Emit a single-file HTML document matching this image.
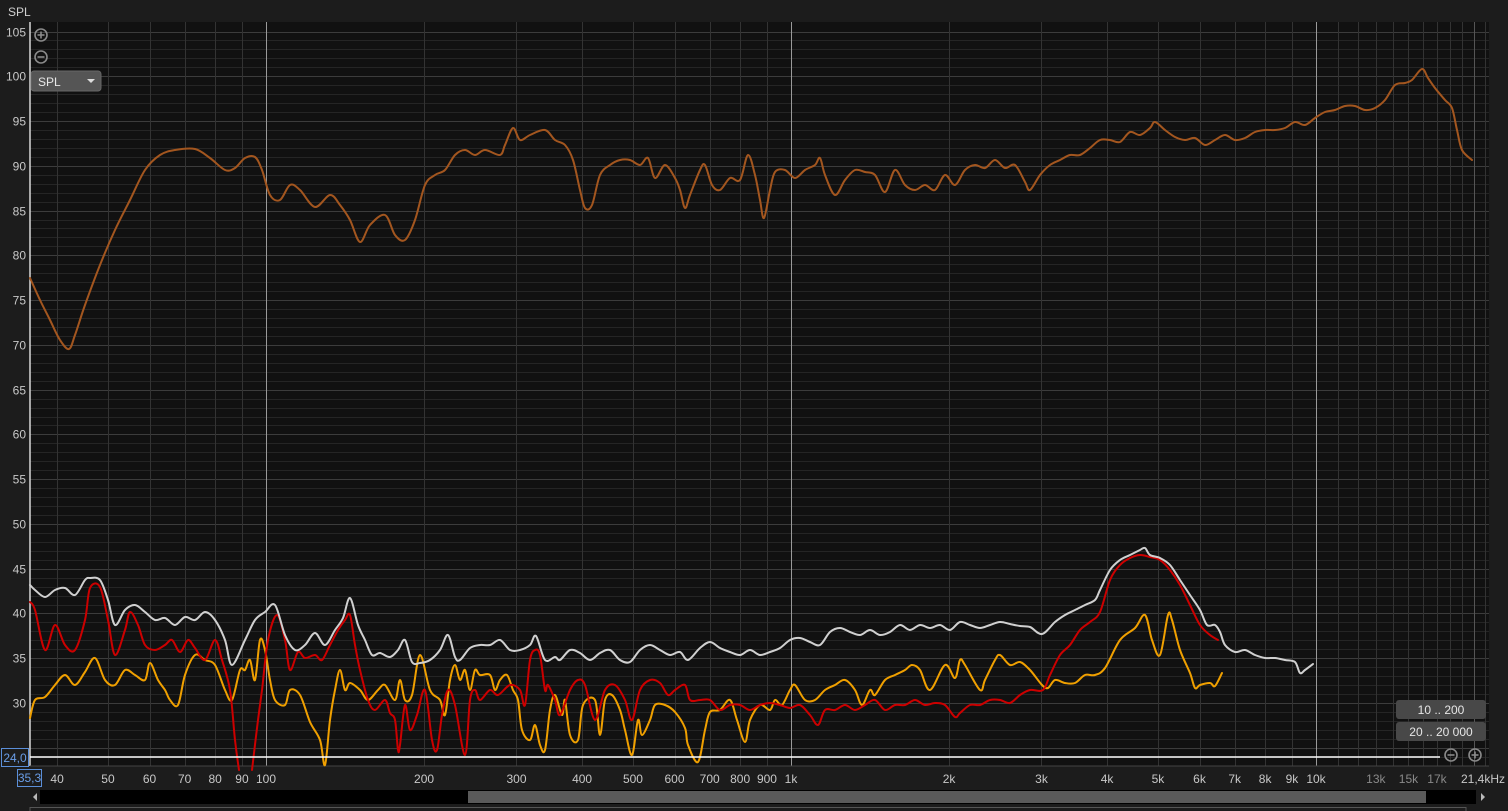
<!DOCTYPE html>
<html><head><meta charset="utf-8"><style>
html,body{margin:0;padding:0;background:#1c1c1c;overflow:hidden}
svg{display:block}
text{font-family:"Liberation Sans",sans-serif}
</style></head><body>
<svg id="s" width="1508" height="811" xmlns="http://www.w3.org/2000/svg">
<rect width="1508" height="811" fill="#1c1c1c"/>
<rect x="30" y="22" width="1459" height="744" fill="#111111"/>
<g id="grid"></g>
<g id="labels" font-size="12" fill="#c8c8c8"></g>
<text x="8" y="16" font-size="12" fill="#d0d0d0">SPL</text>
<line x1="30" y1="22" x2="30" y2="766" stroke="#d8d8d8" stroke-width="1.5"/>
<line x1="30" y1="766" x2="1489" y2="766" stroke="#444"/>
<g id="curves" fill="none" stroke-width="2" stroke-linejoin="round" stroke-linecap="round">
<polyline stroke="#a3561f" points="30,278 40,300 50,320 60,340 69,349 75,335 85,305 100,265 115,230 130,200 145,170 160,155 175,150 195,149 210,158 225,170 235,168 245,158 255,157 262,170 270,195 280,200 290,185 300,190 315,207 330,195 340,205 350,220 360,242 370,225 385,215 395,235 405,240 415,220 425,185 435,175 445,170 455,155 465,150 475,155 485,150 500,155 505,145 513,128 520,140 530,135 545,130 555,140 565,145 573,160 580,190 585,208 592,205 600,175 610,165 620,160 630,160 640,165 648,158 655,178 665,165 675,178 680,190 685,208 690,195 700,170 705,165 712,185 720,190 730,178 740,180 748,155 755,175 760,200 764,218 770,190 775,172 785,170 795,178 805,170 815,165 820,158 825,175 835,195 845,180 855,170 865,172 875,175 885,192 895,170 905,185 915,190 925,185 935,190 945,175 955,185 965,170 975,165 985,168 995,160 1005,168 1015,165 1025,182 1030,190 1040,175 1050,165 1060,160 1070,155 1080,155 1090,148 1100,140 1110,140 1120,142 1130,132 1140,135 1150,128 1155,122 1165,130 1175,137 1185,140 1195,138 1205,145 1215,140 1225,135 1235,140 1245,138 1255,132 1265,130 1275,130 1285,128 1295,122 1305,125 1315,118 1325,112 1335,110 1345,106 1355,106 1365,110 1375,108 1385,100 1395,85 1405,83 1412,80 1422,69 1428,78 1435,88 1445,100 1452,108 1457,130 1462,150 1472,160"/>
<polyline stroke="#f0a000" points="30,718 35,700 45,697 55,685 65,675 75,685 85,672 95,658 105,680 115,685 125,670 135,675 145,680 150,663 158,680 165,690 170,700 178,705 185,675 195,655 205,660 215,665 225,690 232,700 240,670 245,670 250,660 255,680 260,640 265,650 270,680 275,700 285,705 290,690 300,695 310,722 320,740 325,765 330,720 335,690 340,670 345,690 350,683 360,690 368,700 378,690 385,685 395,700 400,680 405,700 412,695 420,655 430,690 440,700 445,715 450,680 455,665 460,680 465,670 470,690 475,670 480,675 490,675 495,690 500,680 507,675 513,690 518,700 522,730 530,740 535,725 540,745 545,750 550,710 555,695 562,715 565,700 570,735 578,740 583,705 595,700 600,735 605,700 612,695 620,710 625,730 632,755 638,720 642,735 650,720 655,705 665,705 675,712 685,728 688,745 698,762 705,730 710,712 720,710 730,700 737,720 745,742 750,720 760,705 770,710 775,700 782,705 790,690 795,685 805,700 815,700 825,690 835,685 845,680 855,690 862,705 870,690 875,695 885,680 895,675 905,670 912,665 920,670 930,690 945,665 955,678 960,660 965,665 980,690 985,680 995,660 1000,655 1010,665 1020,662 1030,670 1042,685 1048,688 1055,680 1065,683 1075,683 1085,675 1095,675 1105,668 1120,640 1135,628 1145,615 1152,640 1160,655 1168,615 1172,620 1180,650 1190,673 1195,688 1200,685 1210,683 1215,686 1222,673"/>
<polyline stroke="#cc0000" points="30,602 35,610 45,650 55,625 65,645 75,650 85,620 90,588 100,587 108,620 115,655 125,630 130,612 138,625 145,645 155,650 165,645 172,640 180,652 188,640 195,648 205,660 215,640 222,660 230,690 235,740 239,770"/>
<polyline stroke="#cc0000" points="252,770 258,720 262,690 268,640 277,615 285,640 290,670 298,652 305,658 315,655 322,660 330,645 338,630 345,620 350,615 355,645 360,670 368,700 375,710 385,700 390,713 395,720 398,750 400,745 405,705 410,730 417,715 425,690 432,740 437,750 442,715 448,690 455,705 465,755 470,700 475,690 480,700 490,690 498,695 510,685 520,690 525,705 530,660 535,650 540,655 545,690 548,685 555,700 560,715 570,690 578,680 585,685 595,720 605,690 615,685 625,700 632,720 640,690 650,680 660,683 668,695 675,690 685,685 690,700 700,700 710,700 720,710 730,705 740,705 750,710 760,705 770,703 780,705 790,708 800,705 810,715 818,725 825,710 835,710 845,705 855,710 865,705 875,700 885,710 895,705 905,705 915,700 925,705 935,703 945,705 955,717 960,713 970,705 980,705 990,700 1000,700 1010,703 1020,695 1030,690 1043,690 1050,675 1060,655 1070,645 1080,630 1090,622 1100,612 1110,580 1120,565 1130,558 1140,555 1150,557 1160,560 1170,570 1180,585 1190,605 1200,625 1210,635 1218,640"/>
<polyline stroke="#d0d0d0" points="30,585 35,590 45,597 55,590 65,588 75,595 85,580 90,578 100,580 108,600 115,625 125,610 135,605 145,612 155,620 165,618 175,625 185,617 195,620 205,612 215,620 225,640 232,665 245,640 255,620 265,612 275,605 285,635 295,650 305,645 315,633 325,645 335,630 343,618 350,598 358,625 365,640 372,655 380,653 390,657 398,650 405,640 412,662 420,663 430,660 440,650 448,635 455,657 460,660 470,648 480,645 490,645 500,640 510,650 520,650 530,645 536,636 545,660 555,657 560,660 570,650 580,653 590,660 600,653 610,650 620,660 630,662 640,650 650,645 660,650 670,655 680,652 688,660 700,648 710,642 720,648 730,652 740,655 750,650 760,655 770,652 780,648 790,640 800,638 810,642 820,645 830,632 840,628 850,632 860,635 870,630 880,635 890,632 900,625 910,630 920,625 930,628 940,625 950,630 960,622 970,625 980,628 990,625 1000,622 1010,624 1020,626 1030,627 1042,634 1055,622 1065,615 1075,610 1085,605 1095,600 1100,590 1110,570 1120,560 1130,555 1140,550 1145,548 1150,555 1160,558 1170,565 1180,580 1190,595 1200,610 1207,625 1215,625 1220,632 1225,645 1235,652 1245,650 1255,655 1265,658 1275,658 1285,660 1295,662 1300,673 1305,670 1313,664"/>
</g>
<line x1="30" y1="757" x2="1440" y2="757" stroke="#ffffff" stroke-width="1.5"/>
<rect x="1.5" y="748.5" width="27" height="18" fill="#1c1c1c" stroke="#5b8fd9"/>
<text x="15" y="762" font-size="12" fill="#6a9ee8" text-anchor="middle">24,0</text>
<rect x="17.5" y="769.5" width="24" height="17" fill="#1c1c1c" stroke="#5b8fd9"/>
<text x="29.5" y="782" font-size="12" fill="#6a9ee8" text-anchor="middle">35,3</text>
<g stroke="#8a8a8a" stroke-width="1.6" fill="none">
<circle cx="41" cy="35" r="6"/><line x1="37.5" y1="35" x2="44.5" y2="35"/><line x1="41" y1="31.5" x2="41" y2="38.5"/>
<circle cx="41" cy="57" r="6"/><line x1="37.5" y1="57" x2="44.5" y2="57"/>
<circle cx="1451" cy="755" r="6"/><line x1="1447.5" y1="755" x2="1454.5" y2="755"/>
<circle cx="1475" cy="755" r="6"/><line x1="1471.5" y1="755" x2="1478.5" y2="755"/><line x1="1475" y1="751.5" x2="1475" y2="758.5"/>
</g>
<rect x="31" y="71" width="70" height="20" rx="3" fill="#555" stroke="#666"/>
<text x="38" y="86" font-size="12" fill="#e8e8e8">SPL</text>
<polygon points="87,79 95,79 91,83" fill="#ddd"/>
<rect x="1396" y="700" width="90" height="19" rx="3" fill="#484848"/>
<text x="1441" y="714" font-size="12" fill="#e6e6e6" text-anchor="middle">10 .. 200</text>
<rect x="1396" y="722" width="90" height="19" rx="3" fill="#484848"/>
<text x="1441" y="736" font-size="12" fill="#e6e6e6" text-anchor="middle">20 .. 20 000</text>
<polygon points="37,793 37,801 33,797" fill="#bbb"/>
<rect x="40" y="790" width="1436" height="14" fill="#000"/>
<rect x="468" y="791" width="958" height="12" fill="#5a5a5a"/>
<polygon points="1481,793 1481,801 1485,797" fill="#bbb"/>
<line x1="30" y1="807.5" x2="1466" y2="807.5" stroke="#555"/>
<line x1="30" y1="807" x2="30" y2="811" stroke="#555"/>
<line x1="1466" y1="807" x2="1466" y2="811" stroke="#555"/>
</svg>
<script>
var NS="http://www.w3.org/2000/svg",g=document.getElementById('grid'),L=document.getElementById('labels');
function el(p,t,a){var e=document.createElementNS(NS,t);for(var k in a)e.setAttribute(k,a[k]);p.appendChild(e);return e;}
function Y(d){return 703-(d-30)*8.953;}
function X(f){return 266+525*Math.log10(f/100);}
for(var d=24;d<=105;d++){var y=Math.round(Y(d))+0.5;if(y<22)continue;
 el(g,'line',{x1:30,x2:1489,y1:y,y2:y,stroke:d%5==0?'#3c3c3c':'#252525'});
 if(d%5==0&&d>=30){var t=el(L,'text',{x:26,y:y+4,'text-anchor':'end'});t.textContent=d;}}
var fs=[];for(var f=40;f<100;f+=10)fs.push(f);for(f=100;f<1000;f+=100)fs.push(f);for(f=1000;f<10000;f+=1000)fs.push(f);for(f=10000;f<=21000;f+=1000)fs.push(f);
fs.forEach(function(f){var x=Math.round(X(f))+0.5;var br=(f==100||f==1000||f==10000);
 el(g,'line',{x1:x,x2:x,y1:22,y2:766,stroke:br?'#9a9a9a':(f==20000?'#555':'#333')});});
var lab={40:'40',50:'50',60:'60',70:'70',80:'80',90:'90',100:'100',200:'200',300:'300',400:'400',500:'500',600:'600',700:'700',800:'800',900:'900',1000:'1k',2000:'2k',3000:'3k',4000:'4k',5000:'5k',6000:'6k',7000:'7k',8000:'8k',9000:'9k',10000:'10k',13000:'13k',15000:'15k',17000:'17k'};
for(var k in lab){var t=el(L,'text',{x:X(+k),y:783,'text-anchor':'middle'});t.textContent=lab[k];if(+k>10000)t.setAttribute('fill','#8a8a8a');}
var t=el(L,'text',{x:1505,y:783,'text-anchor':'end'});t.textContent='21,4kHz';
// smooth polylines (Catmull-Rom)
var c=document.getElementById('curves');
Array.prototype.slice.call(c.querySelectorAll('polyline')).forEach(function(pl){
 var p=pl.getAttribute('points').trim().split(/\s+/).map(function(s){var a=s.split(',');return[+a[0],+a[1]];});
 var d='M'+p[0][0]+','+p[0][1];
 for(var i=0;i<p.length-1;i++){var p0=p[i-1]||p[i],p1=p[i],p2=p[i+1],p3=p[i+2]||p2;
  d+=' C'+(p1[0]+(p2[0]-p0[0])/6).toFixed(1)+','+(p1[1]+(p2[1]-p0[1])/6).toFixed(1)+' '+(p2[0]-(p3[0]-p1[0])/6).toFixed(1)+','+(p2[1]-(p3[1]-p1[1])/6).toFixed(1)+' '+p2[0]+','+p2[1];}
 var pa=document.createElementNS(NS,'path');pa.setAttribute('d',d);pa.setAttribute('stroke',pl.getAttribute('stroke'));
 c.replaceChild(pa,pl);});
</script>
</body></html>
